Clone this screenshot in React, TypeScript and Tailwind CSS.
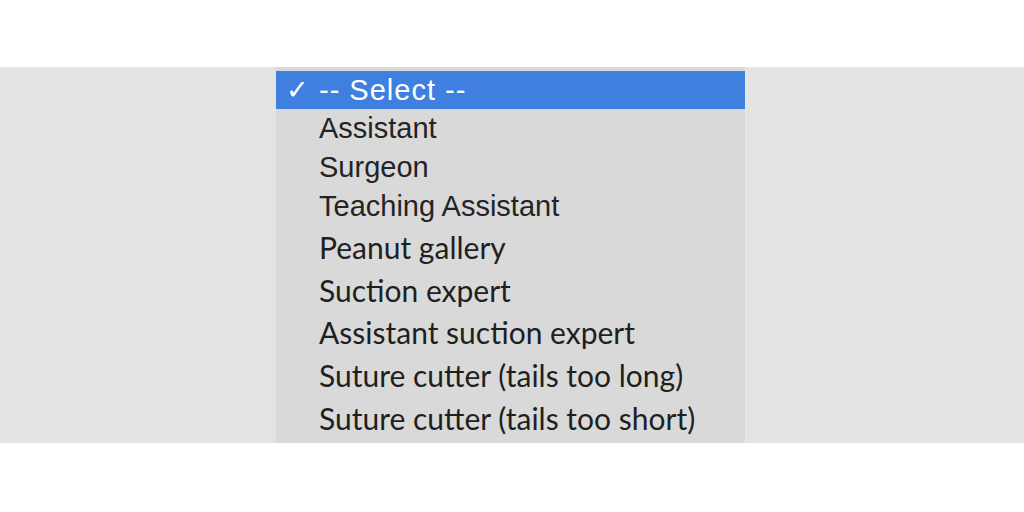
import React from "react";

const topItems = ["Assistant", "Surgeon", "Teaching Assistant"];
const lowItems = [
  "Peanut gallery",
  "Suction expert",
  "Assistant suction expert",
  "Suture cutter (tails too long)",
  "Suture cutter (tails too short)",
];

export default function App() {
  return (
    <div className="w-[1024px] h-[512px] flex flex-col bg-white overflow-hidden">
      <div className="h-[67px] bg-white" />
      <div className="h-[376px] bg-[#e3e3e3] flex">
        <div className="ml-[276px] w-[470px] h-full bg-[#d9d9d9] pt-[4px] flex flex-col border-r border-[#e8e8e8]">
          <div className="h-[38px] bg-[#3e7fe0] flex items-center text-white font-['Liberation_Sans',Arial,sans-serif] text-[29px]">
            <span className="w-[43px] pl-[10px] text-[27px] leading-none">✓</span>
            <span className="leading-none tracking-[1px]">-- Select --</span>
          </div>
          {topItems.map((t) => (
            <div
              key={t}
              className="h-[39px] flex items-center pl-[43px] text-[#242424] font-['Liberation_Sans',Arial,sans-serif] text-[29px] leading-none"
            >
              {t}
            </div>
          ))}
          {lowItems.map((t) => (
            <div
              key={t}
              className="h-[42.6px] flex items-center pl-[43px] text-[#1f1f1f] font-['Lato','Open_Sans',sans-serif] text-[30px] leading-none"
            >
              {t}
            </div>
          ))}
        </div>
      </div>
      <div className="flex-1 bg-white" />
    </div>
  );
}
